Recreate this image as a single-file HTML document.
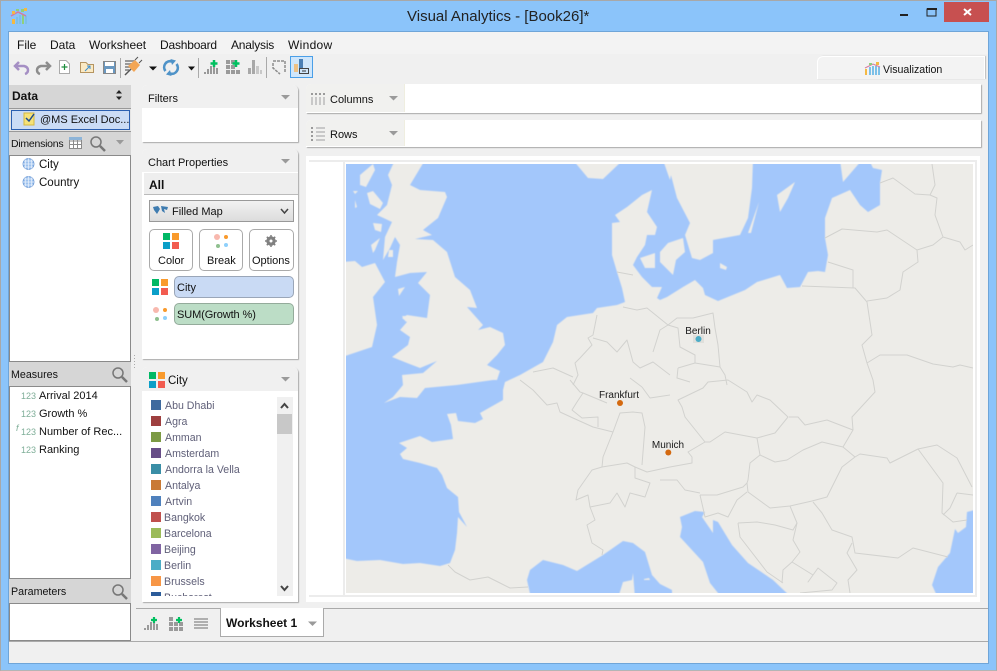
<!DOCTYPE html>
<html><head><meta charset="utf-8"><title>Visual Analytics</title>
<style>
html,body{margin:0;padding:0;width:997px;height:671px;overflow:hidden;background:#8bc4fa}
body{position:relative;font:12px "Liberation Sans",sans-serif;color:#111}
.b{position:absolute;box-sizing:border-box}
.t{position:absolute;white-space:nowrap;line-height:14px;font-size:12px}
.h{background:#d6d6d6}
.p{background:#fff;box-shadow:1px 1px 1px #aaa;border-radius:5px 5px 0 0}
.ph{position:absolute;left:0;right:0;top:0;height:23px;background:#f0f0f0;border-radius:5px 5px 0 0}
.l{color:#5f5f78;font-size:10.6px!important}
svg{position:absolute;left:0;top:0}
</style></head><body>
<div class="b" style="left:0;top:0;width:997px;height:671px;border:1px solid #a8a8a8;border-bottom-color:#b5b5b5"></div>
<div class="b" style="left:8px;top:31px;width:981px;height:633px;background:#f0f0f0;border:1px solid #6fa5d8"></div>
<div class="t" style="left:407px;top:8px;font-size:15px;line-height:18px;color:#222">Visual Analytics - [Book26]*</div>
<div class="b" style="left:944px;top:2px;width:45px;height:20px;background:#c75050"></div>
<div class="b" style="left:9px;top:54px;width:979px;height:30px;background:#f0f0f0"></div>
<div class="b" style="left:9px;top:32px;width:979px;height:22px;background:#f3f3f3"></div>
<div class="t" style="left:17px;top:38px">File</div>
<div class="t" style="left:50px;top:38px">Data</div>
<div class="t" style="left:89px;top:38px">Worksheet</div>
<div class="t" style="left:160px;top:38px;letter-spacing:-.2px">Dashboard</div>
<div class="t" style="left:231px;top:38px;letter-spacing:-.2px">Analysis</div>
<div class="t" style="left:288px;top:38px;letter-spacing:.3px">Window</div>
<div class="b" style="left:817px;top:56px;width:168px;height:23px;background:#f3f3f3;border:1px solid #fff;border-bottom:0;border-radius:6px 0 0 0;box-shadow:1px 0 1px #bbb"></div>
<div class="t" style="left:883px;top:63px;font-size:10.6px">Visualization</div>
<div class="b" style="left:290px;top:56px;width:23px;height:22px;background:#cfe6fb;border:1px solid #4a9fe8"></div>

<!-- left column -->
<div class="b h" style="left:9px;top:85px;width:122px;height:23px"></div>
<div class="t" style="left:12px;top:89px;font-weight:bold">Data</div>
<div class="b" style="left:9px;top:108px;width:122px;height:24px;background:#e4e4e4;border-top:1px solid #999;border-bottom:1px solid #999"></div>
<div class="b" style="left:11px;top:110px;width:119px;height:20px;background:#cbdcf5;border:1px solid #2b5fb0"></div>
<div class="t" style="left:40px;top:113px;font-size:11px">@MS Excel Doc...</div>
<div class="b h" style="left:9px;top:132px;width:122px;height:23px"></div>
<div class="t" style="left:11px;top:137px;font-size:10.5px;letter-spacing:-.25px">Dimensions</div>
<div class="b" style="left:9px;top:155px;width:122px;height:207px;background:#fff;border:1px solid #8a8a8a"></div>
<div class="t" style="left:39px;top:158px;font-size:11.5px">City</div>
<div class="t" style="left:39px;top:176px;font-size:11.5px">Country</div>
<div class="b h" style="left:9px;top:362px;width:122px;height:24px"></div>
<div class="t" style="left:11px;top:368px;font-size:10.7px">Measures</div>
<div class="b" style="left:9px;top:386px;width:122px;height:193px;background:#fff;border:1px solid #8a8a8a"></div>
<div class="t" style="left:39px;top:389px;font-size:11px">Arrival 2014</div>
<div class="t" style="left:39px;top:407px;font-size:11px">Growth %</div>
<div class="t" style="left:39px;top:425px;font-size:11px">Number of Rec...</div>
<div class="t" style="left:39px;top:443px;font-size:11px">Ranking</div>
<div class="t" style="left:21px;top:389px;font-size:9px;color:#7fae98">123</div>
<div class="t" style="left:21px;top:407px;font-size:9px;color:#7fae98">123</div>
<div class="t" style="left:21px;top:425px;font-size:9px;color:#7fae98">123</div>
<div class="t" style="left:16px;top:421px;font-size:9px;color:#7fae98;font-style:italic">f</div>
<div class="t" style="left:21px;top:443px;font-size:9px;color:#7fae98">123</div>
<div class="b h" style="left:9px;top:579px;width:122px;height:24px"></div>
<div class="t" style="left:11px;top:585px;font-size:10.7px">Parameters</div>
<div class="b" style="left:9px;top:603px;width:122px;height:38px;background:#fff;border:1px solid #8a8a8a"></div>

<!-- middle -->
<div class="b p" style="left:142px;top:85px;width:156px;height:57px"><div class="ph"></div></div>
<div class="t" style="left:148px;top:92px;font-size:11px">Filters</div>
<div class="b p" style="left:142px;top:149px;width:156px;height:210px"><div class="ph"></div>
<div class="b" style="left:2px;top:24px;width:154px;height:22px;background:#eee;border-bottom:1px solid #bbb"></div></div>
<div class="t" style="left:148px;top:156px;font-size:11px">Chart Properties</div>
<div class="t" style="left:149px;top:178px;font-weight:bold">All</div>
<div class="b" style="left:149px;top:200px;width:145px;height:22px;background:linear-gradient(#f2f2f2,#dcdcdc);border:1px solid #999"></div>
<div class="t" style="left:172px;top:205px;font-size:11px">Filled Map</div>
<div class="b" style="left:149px;top:229px;width:44px;height:42px;background:#fff;border:1px solid #aaa;border-radius:5px"></div>
<div class="b" style="left:199px;top:229px;width:44px;height:42px;background:#fff;border:1px solid #aaa;border-radius:5px"></div>
<div class="b" style="left:249px;top:229px;width:45px;height:42px;background:#fff;border:1px solid #aaa;border-radius:5px"></div>
<div class="t" style="left:158px;top:254px;font-size:11px">Color</div>
<div class="t" style="left:207px;top:254px;font-size:11px">Break</div>
<div class="t" style="left:252px;top:254px;font-size:11px">Options</div>
<div class="b" style="left:174px;top:276px;width:120px;height:22px;background:#c9daf4;border:1px solid #9aa6b8;border-radius:5px"></div>
<div class="t" style="left:177px;top:281px;font-size:11px">City</div>
<div class="b" style="left:174px;top:303px;width:120px;height:22px;background:#bcddc6;border:1px solid #94ab9b;border-radius:5px"></div>
<div class="t" style="left:177px;top:308px;font-size:11px;letter-spacing:-.1px">SUM(Growth %)</div>
<div class="b p" style="left:142px;top:367px;width:156px;height:235px"><div class="ph" style="height:24px"></div></div>
<div class="t" style="left:168px;top:374px;font-size:11.5px">City</div>
<div class="b" style="left:148px;top:397px;width:144px;height:199px;overflow:hidden">
<div class="b" style="left:3px;top:3px;width:10px;height:10px;background:#3f6a9e"></div><div class="t l" style="left:17px;top:2px">Abu Dhabi</div>
<div class="b" style="left:3px;top:19px;width:10px;height:10px;background:#9e3f3f"></div><div class="t l" style="left:17px;top:18px">Agra</div>
<div class="b" style="left:3px;top:35px;width:10px;height:10px;background:#7c9a44"></div><div class="t l" style="left:17px;top:34px">Amman</div>
<div class="b" style="left:3px;top:51px;width:10px;height:10px;background:#674d87"></div><div class="t l" style="left:17px;top:50px">Amsterdam</div>
<div class="b" style="left:3px;top:67px;width:10px;height:10px;background:#3a8ea6"></div><div class="t l" style="left:17px;top:66px">Andorra la Vella</div>
<div class="b" style="left:3px;top:83px;width:10px;height:10px;background:#c97a35"></div><div class="t l" style="left:17px;top:82px">Antalya</div>
<div class="b" style="left:3px;top:99px;width:10px;height:10px;background:#4f81bd"></div><div class="t l" style="left:17px;top:98px">Artvin</div>
<div class="b" style="left:3px;top:115px;width:10px;height:10px;background:#c0504d"></div><div class="t l" style="left:16px;top:114px">Bangkok</div>
<div class="b" style="left:3px;top:131px;width:10px;height:10px;background:#9bbb59"></div><div class="t l" style="left:16px;top:130px">Barcelona</div>
<div class="b" style="left:3px;top:147px;width:10px;height:10px;background:#8064a2"></div><div class="t l" style="left:16px;top:146px">Beijing</div>
<div class="b" style="left:3px;top:163px;width:10px;height:10px;background:#4bacc6"></div><div class="t l" style="left:16px;top:162px">Berlin</div>
<div class="b" style="left:3px;top:179px;width:10px;height:10px;background:#f79646"></div><div class="t l" style="left:16px;top:178px">Brussels</div>
<div class="b" style="left:3px;top:195px;width:10px;height:10px;background:#2c5c9a"></div><div class="t l" style="left:16px;top:194px">Bucharest</div>
</div>
<div class="b" style="left:277px;top:397px;width:16px;height:199px;background:#f0f0f0"></div>
<div class="b" style="left:277px;top:414px;width:15px;height:20px;background:#c8c8c8"></div>

<!-- shelves -->
<div class="b p" style="left:306px;top:84px;width:675px;height:29px;border-radius:5px 0 0 0"></div>
<div class="b" style="left:306px;top:84px;width:99px;height:28px;background:#f1f1ef;border-right:1px solid #efeee0;border-radius:5px 0 0 0"></div>
<div class="t" style="left:330px;top:93px;font-size:11px">Columns</div>
<div class="b p" style="left:306px;top:120px;width:675px;height:27px;border-radius:5px 0 0 0"></div>
<div class="b" style="left:306px;top:120px;width:99px;height:26px;background:#f1f1ef;border-right:1px solid #efeee0;border-radius:5px 0 0 0"></div>
<div class="t" style="left:330px;top:128px;font-size:11px">Rows</div>

<!-- map frame -->
<div class="b" style="left:306px;top:156px;width:674px;height:446px;background:#fff"></div>
<div class="b" style="left:309px;top:160px;width:667px;height:2px;background:#ececec"></div>
<div class="b" style="left:343px;top:160px;width:2px;height:436px;background:#ececec"></div>
<div class="b" style="left:975px;top:160px;width:2px;height:436px;background:#ececec"></div>
<div class="b" style="left:309px;top:595px;width:668px;height:2px;background:#ececec"></div>

<svg width="997" height="671" viewBox="0 0 997 671">
<defs><clipPath id="m"><rect x="346" y="164" width="627" height="429"/></clipPath>
<filter id="bl" x="300" y="120" width="720" height="520" filterUnits="userSpaceOnUse"><feGaussianBlur stdDeviation=".55"/></filter>
<filter id="bs" x="300" y="120" width="720" height="520" filterUnits="userSpaceOnUse"><feGaussianBlur stdDeviation=".3"/></filter></defs>
<g clip-path="url(#m)">
<rect x="346" y="164" width="627" height="429" fill="#a3c7fb"/>
<g fill="#edece8" filter="url(#bl)">
<path d="M342 558L357 561L380 560L403 564L420 563L440 566L450 563L455 550L457 533L458 517L467 527L459 512L458 497L447 488L442 475L437 468L420 463L403 459L400 454L407 448L399 443L420 436L432 442L453 439L451 425L447 414L456 413L458 421L475 423L483 419L480 413L503 400L503 390L505 382L520 375L543 362L553 342L557 325L567 317L593 313L597 308L617 305L625 302L622 288L617 272L612 255L612 223L620 222L615 215L627 207L642 195L652 190L647 212L657 227L655 235L647 235L645 245L637 257L633 265L642 277L652 287L662 287L657 298L660 300L667 297L683 287L695 280L703 288L705 295L718 301L745 290L757 282L780 275L787 288L800 287L808 272L818 271L825 272L828 255L825 238L825 218L832 198L850 190L860 205L868 212L880 205L880 183L882 170L873 168L869 160L978 160L978 509L967 512L966 527L958 533L955 529L950 553L938 567L932 585L938 598L792 598L773 580L748 563L732 545L718 522L713 520L713 533L702 517L705 512L695 511L680 517L682 527L680 537L703 562L710 583L722 598L672 598L672 590L660 584L652 575L645 552L633 543L623 541L603 555L590 563L577 571L563 565L543 560L530 570L527 580L531 598L342 598Z"/>
<path d="M395 160L425 160L410 185L420 190L445 192L447 197L438 218L423 230L432 235L415 239L433 240L447 252L455 277L470 290L477 308L467 307L483 325L478 330L490 327L503 333L505 345L497 355L487 365L500 371L497 380L493 380L457 385L425 388L417 398L400 397L384 403L393 397L403 385L402 375L423 373L437 361L420 368L407 363L392 357L408 345L410 337L400 330L407 322L402 318L407 315L427 318L430 295L418 283L427 272L410 273L395 277L397 262L400 245L395 237L390 248L383 260L385 237L392 222L377 215L387 205L392 185L388 175Z"/>
<path d="M342 262L355 261L362 267L375 263L385 282L373 297L377 325L372 347L342 357Z"/>
<path d="M667 160L677 198L690 223L685 235L692 258L700 260L713 253L713 240L740 235L748 218L752 188L753 160Z"/>
<path d="M573 160L588 178L603 179L623 160Z"/>
<path d="M663 160L670 180L674 160Z"/>
<path d="M660 252L668 243L683 238L685 252L676 260L673 275L660 262Z"/>
<path d="M640 258L655 253L655 268L645 268Z"/>
<path d="M777 195L795 182L788 198L780 212Z"/>
<path d="M759 202L748 233L751 233Z"/>
<path d="M720 263L727 267L726 270L720 268Z"/>
<path d="M840 160L862 160L843 182Z"/>
<path d="M360 175L373 164L375 170L366 187L360 185Z"/>
<path d="M367 193L373 191L383 203L380 209L370 204Z"/>
<path d="M353 191L358 191L355 194ZM355 200L357 207L355 208Z"/>
<path d="M373 223L382 224L381 232L375 230Z"/>
<path d="M371 245L380 238L375 250L373 253Z"/>
<path d="M389 250L393 250L393 257L388 257Z"/>
<path d="M398 289L405 287L399 296Z"/>
<path d="M402 316L407 316L406 322Z"/>
<path d="M618 598L623 582L632 580L633 573L635 598Z"/>
<path d="M644 579L649 578L650 580L644 580Z"/>
</g>
<g fill="none" stroke="#d2d2cf" stroke-width="1" stroke-linejoin="round" filter="url(#bs)">
<path d="M448 565L455 572L470 580L488 577L500 583L510 588L528 587"/>
<path d="M520 380L533 390L547 405L557 403L560 412L573 418L593 427L613 432L603 457L602 467L592 470L578 490L576 500L588 495L590 507L595 520L587 525L592 543L603 550L602 555"/>
<path d="M590 507L610 503L617 493L625 507L630 493L645 497L650 483L635 478L635 467L627 463L602 467"/>
<path d="M635 467L647 472L670 467L692 463L692 457L688 452L705 442L685 417L682 407L678 400L703 388L708 382L728 380L747 392L752 402L757 395L770 400L788 417L775 433L757 438L725 432L710 442L705 442"/>
<path d="M757 438L760 455L775 462L787 460L803 450L822 442L843 447L855 457"/>
<path d="M789 417L798 417L805 425L827 420L853 430L843 447"/>
<path d="M853 430L852 417L875 392L873 380L867 363L862 345L872 335L867 302L855 288L802 286"/>
<path d="M867 363L880 355L907 355L933 364L953 367L960 365L973 368"/>
<path d="M867 301L887 298L900 290L903 272L918 262L917 250L933 245L943 237L935 215L937 198L930 195L935 185L932 164"/>
<path d="M825 238L842 229L877 232L887 230L917 250"/>
<path d="M880 183L893 178L915 194L930 195"/>
<path d="M943 237L960 242L965 250L973 245"/>
<path d="M828 262L853 270L853 288"/>
<path d="M760 455L750 463L748 480L747 483L748 492L770 508L790 506L812 501L827 497L842 467L855 457L860 454L887 458L890 463L918 449L937 445L957 458L972 487"/>
<path d="M918 449L943 483L942 513L953 522L967 520"/>
<path d="M957 493L950 508L943 515M957 493L973 495"/>
<path d="M813 502L822 513L832 530L852 537L855 553L898 558L913 548L948 557"/>
<path d="M852 543L847 553L857 570L848 580L850 593"/>
<path d="M790 506L797 523L793 540L800 552L792 562L783 570L782 583"/>
<path d="M738 523L740 537L767 572L783 583M738 523L757 522L775 525L793 530L797 523"/>
<path d="M792 562L813 575L808 582L818 568L837 583L832 590L800 593"/>
<path d="M700 495L703 508L705 517L718 513L728 517L737 500L747 492"/>
<path d="M700 495L717 495L743 487L747 483"/>
<path d="M660 480L677 480L685 490L700 493"/>
<path d="M597 315L593 335L588 338L592 345L580 358L575 363L578 375L573 385M533 372L553 368L573 377"/>
<path d="M593 338L607 342L617 352L627 340L633 362L640 368L653 362L670 375M653 352L660 330L668 325"/>
<path d="M617 272L633 275M623 307L637 310L647 308L668 325L677 318L693 318L713 313L715 328L718 345L720 367L725 375L727 385"/>
<path d="M668 325L678 328L680 347L695 355L695 363L720 367M678 368L695 363M678 368L677 378L690 382"/>
<path d="M613 432L620 413L633 412L642 413L645 427L642 465"/>
<path d="M577 402L572 410L582 418L598 417L598 427M583 393L577 402M570 380L580 392L583 393L607 403M642 387L650 398L670 395M642 387L630 378"/>
</g>
<rect x="693" y="335" width="11" height="8" fill="#dfdfdb" filter="url(#bs)"/>
<circle cx="698.500" cy="339" r="3" fill="#4bacc6"/>
<circle cx="620" cy="403" r="3" fill="#d4690f"/>
<circle cx="668.300" cy="452.500" r="3" fill="#d4690f"/>
<g font-family="Liberation Sans,sans-serif" font-size="10" fill="#1a1a1a" text-anchor="middle">
<text x="698" y="334">Berlin</text><text x="619" y="398">Frankfurt</text><text x="668" y="448">Munich</text>
</g>
</g>

<!-- window controls -->
<rect x="900" y="14" width="8" height="2" fill="#222"/>
<rect x="927" y="9" width="9" height="7" fill="none" stroke="#222" stroke-width="1"/><rect x="927" y="8" width="10" height="2" fill="#222"/>
<path d="M964 9L971 15M971 9L964 15" stroke="#fff" stroke-width="2"/>
<!-- app icon -->
<g><rect x="12" y="19" width="3" height="5" fill="#f4b942"/><rect x="16" y="17" width="2" height="7" fill="#7cc0e8"/><rect x="19" y="15" width="2" height="9" fill="#7cc0e8"/><rect x="22" y="15" width="2" height="9" fill="#8fd07c"/><rect x="25" y="16" width="2" height="8" fill="#7cc0e8"/>
<path d="M11 16L18 12L26 16" fill="none" stroke="#d47ba0" stroke-width="1.500"/><rect x="12" y="11" width="3" height="3" fill="#f4b942"/><rect x="16" y="9" width="3" height="2" fill="#8fd07c"/><rect x="21" y="9" width="3" height="3" fill="#8fd07c"/><rect x="24" y="8" width="3" height="3" fill="#f4b942"/></g>
<!-- undo/redo -->
<path d="M19 62L15 66L19 70M15 66H24Q28 67 28 70T25 74" fill="none" stroke="#a58fc4" stroke-width="2.500"/>
<path d="M46 62L50 66L46 70M50 66H41Q37 67 37 70T40 74" fill="none" stroke="#8d8d8d" stroke-width="2.500"/>
<path d="M59.500 60.500H66L69.500 64V73.500H59.500Z" fill="#fff" stroke="#aaa"/><path d="M64.500 64V70M61.500 67H67.500" stroke="#1e8e3e" stroke-width="1.200"/>
<path d="M80.500 62.500H86L88 64.500H93.500V72.500H80.500Z" fill="#fbeac4" stroke="#b59561"/><path d="M85 71L90 66M87 66H90V69" fill="none" stroke="#3a8ed0"/>
<rect x="103.500" y="61.500" width="12" height="12" fill="#6a98c0" stroke="#888"/><rect x="105" y="62" width="9" height="4" fill="#fff"/><rect x="106" y="69" width="7" height="4" fill="#fff"/>
<rect x="120" y="58" width="1" height="20" fill="#aaa"/><rect x="198" y="58" width="1" height="20" fill="#aaa"/><rect x="266" y="57" width="1" height="21" fill="#aaa"/>
<!-- wizard -->
<g fill="#999"><rect x="125" y="60" width="10" height="2"/><rect x="125" y="63" width="7" height="2"/><rect x="125" y="66" width="6" height="2"/><rect x="125" y="69" width="4" height="2"/></g><path d="M125 75L131 69" stroke="#555" stroke-width="1.500"/><path d="M128 66L135 60L140 65L134 72Z" fill="#f3a655"/><path d="M135 60L138 57M139 63L142 60" stroke="#555"/>
<path d="M149 66.500H157L153 70.500Z" fill="#111"/><path d="M188 66.500H195L191.500 70.500Z" fill="#111"/>
<!-- refresh -->
<path d="M165.500 71A6 6 0 0 1 172 61.500M176.500 64A6 6 0 0 1 170 73.500" fill="none" stroke="#4f93c8" stroke-width="2.600"/><path d="M170.500 59L176 60.500L172 65ZM171.500 76L166 74.500L170 70Z" fill="#4f93c8"/>
<!-- bars plus -->
<g fill="#999"><rect x="204" y="72" width="2" height="2"/><rect x="207" y="69" width="2" height="5"/><rect x="210" y="66" width="2" height="8"/><rect x="213" y="66" width="2" height="8"/><rect x="216" y="68" width="2" height="6"/></g>
<path d="M214 60V67M210.500 63.500H217.500" stroke="#00c060" stroke-width="2.500"/>
<g fill="#9a9a9a"><rect x="226" y="60" width="4" height="4"/><rect x="231" y="60" width="4" height="4"/><rect x="226" y="65" width="4" height="4"/><rect x="231" y="65" width="4" height="4"/><rect x="226" y="70" width="4" height="4"/><rect x="231" y="70" width="4" height="4"/><rect x="236" y="70" width="4" height="4"/></g>
<path d="M236 60V67M232.500 63.500H239.500" stroke="#00c060" stroke-width="2.500"/>
<g fill="#a8a8a8"><rect x="248" y="68" width="3" height="6"/><rect x="252" y="60" width="3" height="14"/><rect x="256" y="66" width="3" height="8" fill="#c8c8c8"/><rect x="260" y="70" width="2" height="4" fill="#c8c8c8"/></g>
<path d="M273 61H285V73M273 63V68L280 74" fill="none" stroke="#8d8d8d" stroke-width="1.500" stroke-dasharray="3 1"/>
<rect x="294" y="64" width="4" height="8" fill="#eec083"/><rect x="299" y="59" width="4" height="13" fill="#4a7fb5"/><rect x="299.500" y="68.500" width="9" height="5" fill="#cfe6fb" stroke="#444"/><path d="M302 71H306" stroke="#333"/>
<!-- viz tab icon -->
<g><rect x="865" y="69" width="2" height="6" fill="#f4b942"/><rect x="869" y="67" width="2" height="8" fill="#7cc0e8"/><rect x="872" y="66" width="2" height="9" fill="#7cc0e8"/><rect x="875" y="66" width="2" height="9" fill="#7cc0e8"/><rect x="878" y="67" width="2" height="8" fill="#7cc0e8"/><path d="M865 68L873 64L880 67" fill="none" stroke="#d47ba0"/><rect x="876" y="62" width="3" height="3" fill="#f4b942"/><rect x="869" y="63" width="3" height="2" fill="#8fd07c"/></g>
<!-- data sort / check -->
<path d="M116 93.500H122L119 90ZM116 96.500H122L119 100Z" fill="#222"/>
<rect x="24" y="113" width="10" height="12" fill="#f5e27a" stroke="#d6b93f"/><path d="M26 118L29 121L34 114" fill="none" stroke="#1e4e8e" stroke-width="1.500"/>
<!-- dim icons -->
<g fill="none" stroke="#8a8a8a"><rect x="69.500" y="137.500" width="12" height="11" fill="#fff"/><path d="M69.500 141H81.500M69.500 144.500H81.500M73.500 137.500V148.500M77.500 137.500V148.500"/></g><rect x="69" y="137" width="13" height="3" fill="#8db4d8"/>
<g fill="none" stroke="#777"><circle cx="96" cy="142" r="5" stroke-width="1.500"/><path d="M100 146L105 151" stroke-width="2.500"/><circle cx="118" cy="373" r="5" stroke-width="1.500"/><path d="M122 377L127 382" stroke-width="2.500"/><circle cx="118" cy="590" r="5" stroke-width="1.500"/><path d="M122 594L127 599" stroke-width="2.500"/></g>
<g fill="#9a9a9a"><path d="M116 140H124L120 144.500Z"/><path d="M281 95H290L285.500 99.500Z"/><path d="M281 159H290L285.500 163.500Z"/><path d="M281 377H290L285.500 381.500Z"/><path d="M389 96H398L393.500 100.500Z"/><path d="M389 131H398L393.500 135.500Z"/></g>
<!-- globes -->
<g fill="#9ec2ee" stroke="#6d9ad6" stroke-width=".8"><circle cx="28.500" cy="164" r="5.500"/><circle cx="28.500" cy="182" r="5.500"/></g>
<g fill="none" stroke="#eaf2fc" stroke-width=".7"><path d="M23 164H34M28.500 158.500V169.500M24 161H33M24 167H33M25.500 159.500Q25 164 25.500 168.500M31.500 159.500Q32 164 31.500 168.500M23 182H34M28.500 176.500V187.500M24 179H33M24 185H33M25.500 177.500Q25 182 25.500 186.500M31.500 177.500Q32 182 31.500 186.500"/></g>
<!-- filled map -->
<path d="M153 207L158 206L160 209L157 214L154 210ZM161 206L168 207L167 210L164 209L165 213L162 211Z" fill="#3f7cb0"/>
<path d="M281 209L284.500 213L288 209" fill="none" stroke="#444" stroke-width="1.500"/>
<!-- color grids -->
<g><rect x="163" y="233" width="7" height="7" fill="#00b865"/><rect x="172" y="233" width="7" height="7" fill="#f99a2c"/><rect x="163" y="242" width="7" height="7" fill="#0b9fc8"/><rect x="172" y="242" width="7" height="7" fill="#f25c50"/></g>
<rect x="152" y="279" width="7" height="7" fill="#00b865"/><rect x="161" y="279" width="7" height="7" fill="#f99a2c"/><rect x="152" y="288" width="7" height="7" fill="#0b9fc8"/><rect x="161" y="288" width="7" height="7" fill="#f25c50"/>
<rect x="149" y="372" width="7" height="7" fill="#00b865"/><rect x="158" y="372" width="7" height="7" fill="#f99a2c"/><rect x="149" y="381" width="7" height="7" fill="#0b9fc8"/><rect x="158" y="381" width="7" height="7" fill="#f25c50"/>
<!-- break icons -->
<circle cx="217" cy="237" r="3" fill="#f8b8ae"/><circle cx="226" cy="237" r="2" fill="#f99a2c"/><circle cx="218" cy="246" r="2" fill="#8fc08f"/><circle cx="226" cy="245" r="2" fill="#8fd0fb"/>
<circle cx="156" cy="310" r="3" fill="#f8b8ae"/><circle cx="165" cy="310" r="2" fill="#f99a2c"/><circle cx="157" cy="319" r="2" fill="#8fc08f"/><circle cx="165" cy="318" r="2" fill="#8fd0fb"/>
<!-- gear -->
<circle cx="271" cy="241" r="3.500" fill="none" stroke="#808080" stroke-width="2.500"/><path d="M271 235V247M265 241H277M266.800 236.800L275.200 245.200M275.200 236.800L266.800 245.200" stroke="#808080" stroke-width="1.500"/><circle cx="271" cy="241" r="1.500" fill="#fff"/>
<!-- shelf icons -->
<g stroke="#c8c8c8" stroke-width="2"><path d="M312 97V105M316 97V105M320 97V105M324 97V105"/></g><g stroke="#9a9a9a" stroke-width="2"><path d="M312 93V95M316 93V95M320 93V95M324 93V95"/></g>
<g stroke="#c8c8c8" stroke-width="2"><path d="M316 128H325M316 132H325M316 136H325M316 140H325"/></g><g fill="#9a9a9a"><rect x="311" y="127" width="2" height="2"/><rect x="311" y="131" width="2" height="2"/><rect x="311" y="135" width="2" height="2"/><rect x="311" y="139" width="2" height="2"/></g>
<!-- scroll arrows -->
<path d="M281 408L284.500 404L288 408M281 586L284.500 590L288 586" fill="none" stroke="#444" stroke-width="2"/>
<!-- splitter dots -->
<g fill="#aaa"><rect x="134" y="355" width="1" height="1"/><rect x="134" y="358" width="1" height="1"/><rect x="134" y="361" width="1" height="1"/><rect x="134" y="364" width="1" height="1"/><rect x="134" y="367" width="1" height="1"/></g>
<!-- bottom bar lines -->
<path d="M136 608.500H221M323 608.500H988" stroke="#aaa"/>
<path d="M9 641.500H988" stroke="#aaa"/>
<g fill="#9a9a9a"><rect x="144" y="628" width="2" height="2"/><rect x="147" y="625" width="2" height="5"/><rect x="150" y="622" width="2" height="8"/><rect x="153" y="622" width="2" height="8"/><rect x="156" y="624" width="2" height="6"/><rect x="169" y="617" width="4" height="4"/><rect x="174" y="622" width="4" height="4"/><rect x="169" y="622" width="4" height="4"/><rect x="169" y="627" width="4" height="4"/><rect x="174" y="627" width="4" height="4"/><rect x="179" y="627" width="4" height="4"/><rect x="179" y="622" width="4" height="4"/></g>
<path d="M154 617V623M151 620H157M179 617V623M176 620H182" stroke="#00c060" stroke-width="2.200"/>
<path d="M194 619H208M194 622H208M194 625H208M194 628H208" stroke="#999" stroke-width="1.500"/>
</svg>
<div class="b" style="left:220px;top:608px;width:104px;height:29px;background:#fff;border:1px solid #aaa;border-top:0"></div>
<div class="t" style="left:226px;top:616px;font-weight:bold;font-size:12px">Worksheet 1</div>
<svg width="997" height="671" viewBox="0 0 997 671"><path d="M308 621.500H317L312.500 626Z" fill="#9a9a9a"/></svg>
</body></html>
